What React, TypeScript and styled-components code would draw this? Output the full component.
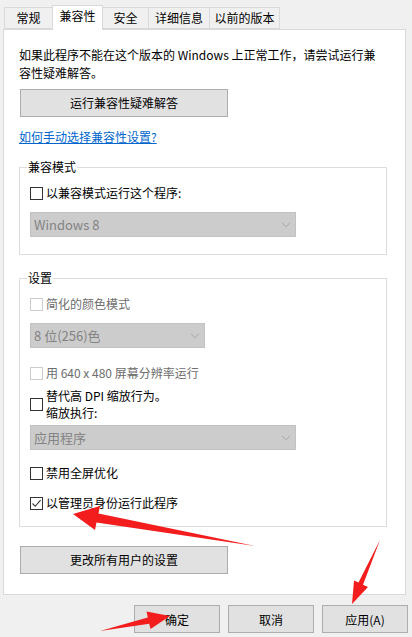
import React from "react";
import styled, { createGlobalStyle } from "styled-components";

const Global = createGlobalStyle`
  html, body { margin: 0; padding: 0; background: #f0f0f0; }
  body { font-family: "Noto Sans CJK SC", "Noto Sans", sans-serif; font-size: 12px; color: #000; }
`;

const Window = styled.div`
  position: relative;
  width: 412px;
  height: 637px;
  background: #f0f0f0;
  overflow: hidden;
  display: flex;
  flex-direction: column;
`;

const TabBar = styled.div`
  display: flex;
  align-items: flex-end;
  height: 29px;
  padding-left: 4px;
  box-sizing: border-box;
  position: relative;
  z-index: 2;
`;

const Tab = styled.div<{ $active?: boolean; $w: number }>`
  box-sizing: border-box;
  width: ${(p) => p.$w}px;
  height: ${(p) => (p.$active ? 25 : 22)}px;
  margin-bottom: ${(p) => (p.$active ? -1 : 0)}px;
  margin-left: -1px;
  border: 1px solid #d9d9d9;
  border-bottom: ${(p) => (p.$active ? "none" : "1px solid #d9d9d9")};
  background: ${(p) => (p.$active ? "#ffffff" : "#f0f0f0")};
  display: flex;
  justify-content: center;
  align-items: ${(p) => (p.$active ? "flex-start" : "center")};
  padding-top: ${(p) => (p.$active ? 1 : 0)}px;
  line-height: 18px;
  font-size: 12px;
  position: relative;
  z-index: ${(p) => (p.$active ? 2 : 1)};
  &:first-child { margin-left: 0; }
`;

const Panel = styled.div`
  box-sizing: border-box;
  width: 403px;
  height: 566px;
  margin-left: 3px;
  background: #ffffff;
  border: 1px solid #d9d9d9;
  padding: 16px 0 0 15px;
  display: flex;
  flex-direction: column;
  align-items: flex-start;
  position: relative;
  z-index: 1;
`;

const Intro = styled.p`
  margin: 0;
  line-height: 18px;
  white-space: nowrap;
`;

const PushButton = styled.button<{ $w: number; $mt: number; $ml?: number }>`
  box-sizing: border-box;
  width: ${(p) => p.$w}px;
  height: 28px;
  margin: ${(p) => p.$mt}px 0 0 ${(p) => p.$ml ?? 0}px;
  padding: 0;
  background: #e1e1e1;
  border: 1px solid #adadad;
  font-family: inherit;
  font-size: 12px;
  color: #000;
  line-height: 18px;
`;

const HelpLink = styled.a`
  margin-top: 11px;
  color: #0066cc;
  text-decoration: underline;
  line-height: 18px;
  cursor: pointer;
`;

const Group = styled.fieldset<{ $mt: number; $pb: number }>`
  box-sizing: border-box;
  width: 368px;
  margin: ${(p) => p.$mt}px 0 0 0;
  padding: 0 10px ${(p) => p.$pb}px 10px;
  border: 1px solid #dcdcdc;
  display: flex;
  flex-direction: column;
  align-items: flex-start;
  min-inline-size: 0;
`;

const Legend = styled.legend`
  margin-left: -3px;
  padding: 0 1px;
  line-height: 18px;
  font-size: 12px;
`;

const Row = styled.label<{ $mt: number; $disabled?: boolean }>`
  display: flex;
  align-items: center;
  gap: 3px;
  margin-top: ${(p) => p.$mt}px;
  line-height: 18px;
  color: ${(p) => (p.$disabled ? "#6d6d6d" : "#000")};
`;

const MultiLine = styled.span`
  display: flex;
  flex-direction: column;
  line-height: 17px;
`;

const Box = styled.span<{ $disabled?: boolean }>`
  box-sizing: border-box;
  width: 13px;
  height: 13px;
  flex: none;
  border: 1px solid ${(p) => (p.$disabled ? "#cccccc" : "#333333")};
  background: #fff;
  display: flex;
  align-items: center;
  justify-content: center;
`;

const Select = styled.div<{ $w: number; $mt: number }>`
  box-sizing: border-box;
  width: ${(p) => p.$w}px;
  height: 25px;
  margin-top: ${(p) => p.$mt}px;
  background: #cccccc;
  border: 1px solid #c2c2c2;
  color: #838383;
  font-size: 13px;
  display: flex;
  align-items: center;
  justify-content: space-between;
  padding: 0 4px 0 3px;
`;

const Footer = styled.div`
  display: flex;
  justify-content: flex-end;
  gap: 8px;
  padding: 10px 4px 0 0;
`;

const DialogButton = styled.button`
  box-sizing: border-box;
  width: 86px;
  height: 28px;
  padding: 0;
  background: #e1e1e1;
  border: 1px solid #adadad;
  font-family: inherit;
  font-size: 12px;
  color: #000;
`;

const Overlay = styled.svg`
  position: absolute;
  left: 0;
  top: 0;
  pointer-events: none;
  z-index: 5;
`;

const Check = () => (
  <svg width="11" height="11" viewBox="0 0 11 11">
    <path d="M1.5 5.5 L4.2 8.3 L9.6 2.2" fill="none" stroke="#333" strokeWidth="1.1" />
  </svg>
);

const Chevron = () => (
  <svg width="10" height="6" viewBox="0 0 10 6">
    <path d="M1 0.8 L5 4.8 L9 0.8" fill="none" stroke="#a6a6a6" strokeWidth="1" />
  </svg>
);

const Checkbox: React.FC<{ checked?: boolean; disabled?: boolean }> = ({ checked, disabled }) => (
  <Box $disabled={disabled}>{checked ? <Check /> : null}</Box>
);

const tabs: { label: string; w: number; active?: boolean }[] = [
  { label: "常规", w: 49 },
  { label: "兼容性", w: 51, active: true },
  { label: "安全", w: 47 },
  { label: "详细信息", w: 62 },
  { label: "以前的版本", w: 71 },
];

export default function App() {
  return (
    <Window>
      <Global />
      <TabBar>
        {tabs.map((t) => (
          <Tab key={t.label} $w={t.w} $active={t.active}>
            {t.label}
          </Tab>
        ))}
      </TabBar>
      <Panel>
        <Intro>
          如果此程序不能在这个版本的 Windows 上正常工作，请尝试运行兼
          <br />
          容性疑难解答。
        </Intro>
        <PushButton $w={208} $mt={7} $ml={1}>运行兼容性疑难解答</PushButton>
        <HelpLink>如何手动选择兼容性设置?</HelpLink>

        <Group $mt={12} $pb={17}>
          <Legend>兼容模式</Legend>
          <Row $mt={8}>
            <Checkbox />
            以兼容模式运行这个程序:
          </Row>
          <Select $w={266} $mt={10}>
            <span>Windows 8</span>
            <Chevron />
          </Select>
        </Group>

        <Group $mt={14} $pb={14}>
          <Legend>设置</Legend>
          <Row $mt={8} $disabled>
            <Checkbox disabled />
            简化的颜色模式
          </Row>
          <Select $w={175} $mt={10}>
            <span>8 位(256)色</span>
            <Chevron />
          </Select>
          <Row $mt={16} $disabled>
            <Checkbox disabled />
            用 640 x 480 屏幕分辨率运行
          </Row>
          <Row $mt={5}>
            <Checkbox />
            <MultiLine>
              <span>替代高 DPI 缩放行为。</span>
              <span>缩放执行:</span>
            </MultiLine>
          </Row>
          <Select $w={266} $mt={4}>
            <span>应用程序</span>
            <Chevron />
          </Select>
          <Row $mt={14}>
            <Checkbox />
            禁用全屏优化
          </Row>
          <Row $mt={12}>
            <Checkbox checked />
            以管理员身份运行此程序
          </Row>
        </Group>

        <PushButton $w={208} $mt={19} $ml={1}>更改所有用户的设置</PushButton>
      </Panel>
      <Footer>
        <DialogButton>确定</DialogButton>
        <DialogButton>取消</DialogButton>
        <DialogButton>应用(A)</DialogButton>
      </Footer>

      <Overlay width="412" height="637" viewBox="0 0 412 637">
        <g fill="#f31d1d">
          <polygon points="73,514 100,506 98.5,513.5 255,546 96.5,522.5 95,530" />
          <polygon points="352,604 354,580.5 358.5,582.5 380,540 363,584.8 368,587" />
          <polygon points="170,616 146.5,611.5 147.8,617.5 100,631 149.2,623.8 150.5,629" />
        </g>
      </Overlay>
    </Window>
  );
}
